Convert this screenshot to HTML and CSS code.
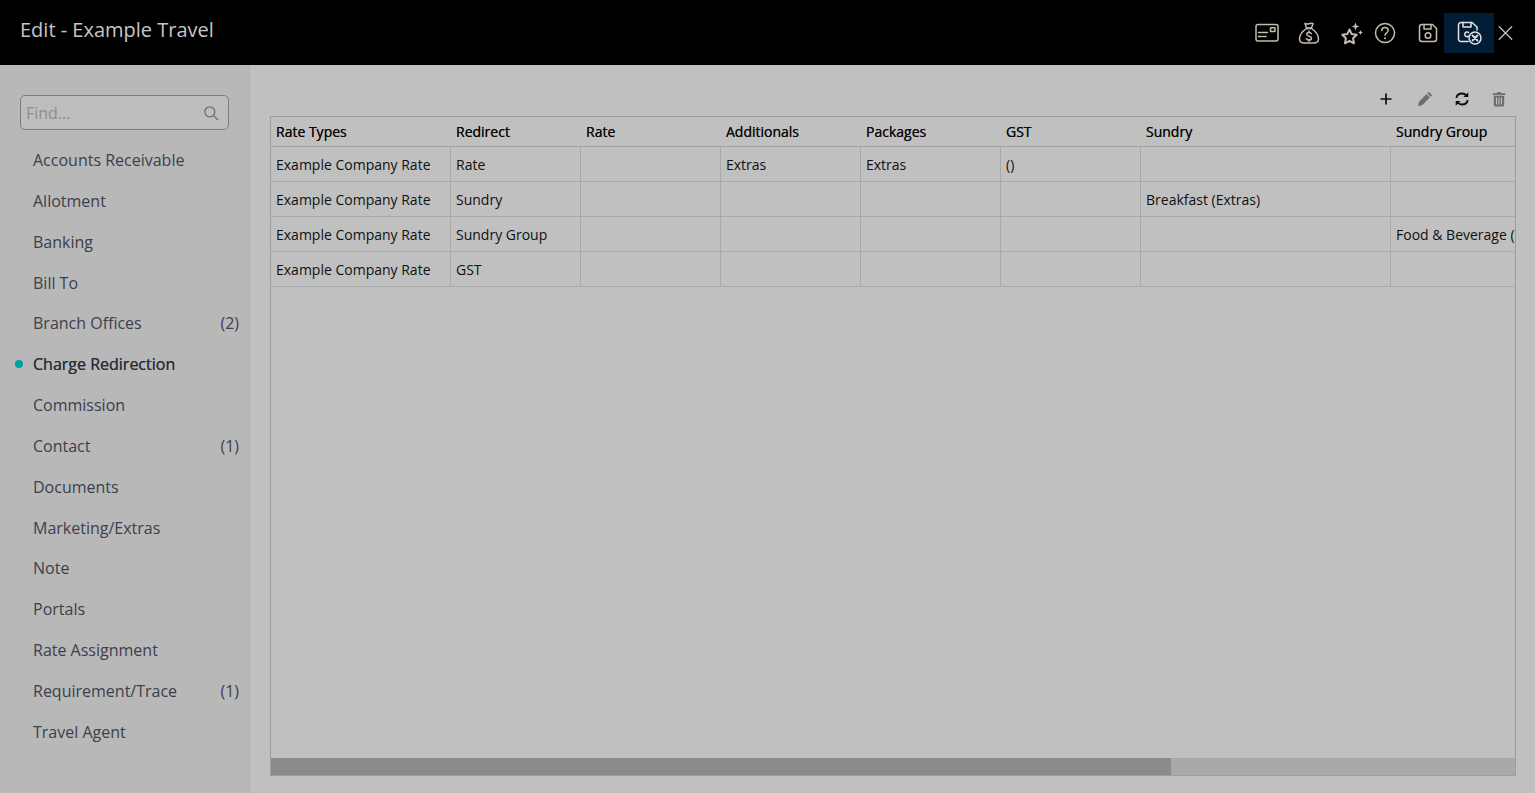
FILE: index.html
```html
<!DOCTYPE html>
<html lang="en">
<head>
<meta charset="utf-8">
<title>Edit - Example Travel</title>
<link rel="stylesheet" href="styles.css">
</head>
<body>
<header class="topbar">
  <h1 class="title">Edit - Example Travel</h1>
  <div class="actions">
    <button class="act act-card" aria-label="Card"><svg viewBox="0 0 24 24" width="24" height="24"><rect x="1" y="3.500" width="22" height="16.500" rx="2"/><rect x="15.500" y="6.800" width="4.500" height="3.700" rx=".5"/><path d="M3.500 11.500h9M3.500 15.500h3M8 15.500h3"/></svg></button>
    <button class="act act-bag" aria-label="Money"><svg viewBox="0 0 24 24" width="24" height="24"><path d="M8 2.500c1.500.8 2.500.8 4 .2s2.500-.5 4-.2L14.500 7h-5z"/><path d="M9.500 7.500C5 10.500 2.500 14.500 2.500 18c0 3 2 4 5 4h9c3 0 5-1 5-4 0-3.500-2.500-7.500-7-10.500z"/><path d="M14.300 12.600c-.6-.8-1.400-1.100-2.300-1.100-1.300 0-2.300.7-2.300 1.800 0 2.500 4.800 1.300 4.800 3.900 0 1.100-1.100 1.800-2.500 1.800-1 0-2-.4-2.600-1.200M12 10v1.500M12 18.800v1.400"/></svg></button>
    <button class="act act-star" aria-label="Features"><svg viewBox="0 0 24 24" width="24" height="24"><path class="thick" d="M9.500 8.500l2.200 4.600 5 .7-3.600 3.500.9 5-4.500-2.400L5 22.300l.9-5-3.600-3.500 5-.7z"/><path class="fill" d="M15.500 1.500l1.100 2.900 2.900 1.100-2.900 1.100-1.100 2.900-1.100-2.900-2.900-1.100 2.900-1.100zM20.500 9l.8 1.700 1.700.8-1.700.8-.8 1.700-.8-1.700-1.700-.8 1.700-.8z"/></svg></button>
    <button class="act act-help" aria-label="Help"><svg viewBox="0 0 24 24" width="24" height="24"><circle cx="12" cy="12" r="9.500"/><path d="M8.800 9.500c0-1.900 1.400-3 3.200-3s3.200 1.100 3.200 2.800c0 2.500-3.200 2.500-3.200 5"/><circle class="fill" cx="12" cy="17.200" r="1"/></svg></button>
    <button class="act act-save" aria-label="Save"><svg viewBox="0 0 24 24" width="24" height="24"><path d="M6 3.500h10.500l4 4V18a2.500 2.500 0 0 1-2.500 2.500H6A2.500 2.500 0 0 1 3.500 18V6A2.500 2.500 0 0 1 6 3.500z"/><path d="M8 3.500v4.500h7V3.500"/><circle cx="12" cy="14.500" r="2.800"/></svg></button>
    <button class="act act-saveclose" aria-label="Save and close"><svg viewBox="0 0 26 26" width="26" height="26"><path class="bright" d="M12 21.500H5A2.500 2.500 0 0 1 2.500 19V5A2.500 2.500 0 0 1 5 2.500h11l5 4.500v3"/><path class="bright" d="M7 2.500v4.500h8V2.500M12.500 12.500c-.7-.8-3.700-1-3.700 1.800 0 2.800 2.600 2.700 3.700 1.800"/><circle class="bright" cx="19" cy="18" r="6"/><path class="bright heavy" d="M16.500 15.500l5 5M21.500 15.500l-5 5"/></svg></button>
    <button class="act act-close" aria-label="Close"><svg viewBox="0 0 24 24" width="24" height="24"><path d="M5.500 5.500l13 13M18.500 5.500l-13 13"/></svg></button>
  </div>
</header>
<div class="body">
  <aside class="sidebar">
    <div class="find">
      <span class="find-text">Find...</span>
      <svg class="find-icon" viewBox="0 0 16 16" width="16" height="16"><circle cx="6.800" cy="6.800" r="5"/><path d="M10.500 10.500l4.500 4.500"/></svg>
    </div>
    <nav class="nav">
      <a class="nav-item">Accounts Receivable</a>
      <a class="nav-item">Allotment</a>
      <a class="nav-item">Banking</a>
      <a class="nav-item">Bill To</a>
      <a class="nav-item">Branch Offices<span class="count">(2)</span></a>
      <a class="nav-item current">Charge Redirection</a>
      <a class="nav-item">Commission</a>
      <a class="nav-item">Contact<span class="count">(1)</span></a>
      <a class="nav-item">Documents</a>
      <a class="nav-item">Marketing/Extras</a>
      <a class="nav-item">Note</a>
      <a class="nav-item">Portals</a>
      <a class="nav-item">Rate Assignment</a>
      <a class="nav-item">Requirement/Trace<span class="count">(1)</span></a>
      <a class="nav-item">Travel Agent</a>
    </nav>
  </aside>
  <main class="main">
    <div class="toolbar">
      <button class="tool tool-add" aria-label="Add"><svg viewBox="0 0 16 16" width="16" height="16"><path class="t-dark" d="M8 2.500v11M2.500 8h11"/></svg></button>
      <button class="tool" aria-label="Edit"><svg viewBox="0 0 16 16" width="16" height="16"><path class="t-grey-fill" d="M11.800.8l3.400 3.400-1.500 1.500-3.400-3.400zM9.500 3.100l3.400 3.400L5.400 14 1 15.200l1-4.500z"/></svg></button>
      <button class="tool" aria-label="Refresh"><svg viewBox="0 0 16 16" width="16" height="16"><path class="t-dark2" d="M2.300 7C2.800 4.200 5.200 2.500 8 2.500c1.800 0 3.300.8 4.300 2M13.700 9c-.5 2.800-2.900 4.500-5.700 4.500-1.800 0-3.300-.8-4.300-2"/><path class="t-dark-fill" d="M14.300 1.200v4.800H9.500zM1.700 14.800V10h4.800z"/></svg></button>
      <button class="tool" aria-label="Delete"><svg viewBox="0 0 16 16" width="16" height="16"><path class="t-grey-fill" d="M1.800 2.300h4l.6-1.300h3.200l.6 1.300h4v1.600H1.800z"/><path class="t-grey-fill" fill-rule="evenodd" d="M2.800 4.700h10.400v9.300c0 .9-.6 1.500-1.500 1.500H4.300c-.9 0-1.500-.6-1.500-1.500zM5 6.500v7h1.100v-7zM7.450 6.500v7h1.100v-7zM9.900 6.500v7H11v-7z"/></svg></button>
    </div>
    <div class="grid-box">
      <div class="grid-view">
        <table class="grid">
          <colgroup>
            <col class="c180"><col class="c130"><col class="c140"><col class="c140"><col class="c140"><col class="c140"><col class="c250"><col class="c250"><col class="c352">
          </colgroup>
          <thead>
            <tr><th>Rate Types</th><th>Redirect</th><th>Rate</th><th>Additionals</th><th>Packages</th><th>GST</th><th>Sundry</th><th>Sundry Group</th><th></th></tr>
          </thead>
          <tbody>
            <tr><td>Example Company Rate</td><td>Rate</td><td></td><td>Extras</td><td>Extras</td><td>()</td><td></td><td></td><td></td></tr>
            <tr><td>Example Company Rate</td><td>Sundry</td><td></td><td></td><td></td><td></td><td>Breakfast (Extras)</td><td></td><td></td></tr>
            <tr><td>Example Company Rate</td><td>Sundry Group</td><td></td><td></td><td></td><td></td><td></td><td>Food &amp; Beverage (Extras)</td><td></td></tr>
            <tr><td>Example Company Rate</td><td>GST</td><td></td><td></td><td></td><td></td><td></td><td></td><td></td></tr>
          </tbody>
        </table>
      </div>
      <div class="hscroll"><div class="hthumb"></div></div>
    </div>
  </main>
</div>
</body>
</html>
```
FILE: styles.css
```css
* { box-sizing: border-box; }
html, body { margin: 0; height: 100%; }
body {
  display: flex;
  flex-direction: column;
  height: 793px;
  overflow: hidden;
  background: #c0c0c0;
  font-family: "Open Sans", "Liberation Sans", sans-serif;
  color: #1c1c1c;
}
button { background: none; border: 0; padding: 0; margin: 0; display: flex; align-items: center; justify-content: center; }
svg { display: block; fill: none; }

.topbar {
  flex: 0 0 65px;
  background: #000;
  display: flex;
  align-items: center;
  justify-content: space-between;
  padding: 1px 18px 0 20px;
}
.title { margin: 0 0 7px; font-size: 20px; font-weight: 400; color: #c6c6c6; line-height: 28px; }
.actions { display: flex; align-items: center; }
.act { height: 40px; }
.act svg { stroke: #c4bcae; stroke-width: 1.500; stroke-linejoin: round; stroke-linecap: round; }
.act svg .fill { fill: #c4bcae; stroke: none; }
.act svg .thick { stroke-width: 2; }
.act-card { width: 24px; margin-right: 18px; }
.act-bag { width: 24px; margin-right: 19px; }
.act-star { width: 24px; margin-right: 9px; }
.act-help { width: 24px; margin-right: 19px; }
.act-save { width: 24px; margin-right: 4px; }
.act-saveclose { width: 50px; background: #011c36; height: 40px; }
.act-saveclose svg .bright { stroke: #e4e4e4; stroke-width: 1.500; }
.act-saveclose svg .heavy { stroke-width: 1.800; }
.act-close { width: 23px; }
.act-close svg { stroke: #c6c6c0; stroke-width: 1.300; }

.body { flex: 1; display: flex; min-height: 0; }
.sidebar {
  flex: 0 0 250px;
  background: #b8b8b8;
  border-right: 1px solid #b0b0b0;
  padding: 30px 10px 0 20px;
}
.find {
  width: 209px;
  height: 35px;
  border: 1px solid #7d7d7d;
  border-radius: 5px;
  background: #bdbdbd;
  display: flex;
  align-items: center;
  justify-content: space-between;
  padding: 0 9px 0 5px;
}
.find-text { font-size: 16px; color: #8e8e8e; }
.find-icon { stroke: #6b6b6b; stroke-width: 1.200; }
.nav { display: flex; flex-direction: column; margin-top: 9.700px; }
.nav-item {
  position: relative;
  height: 40.84px;
  display: flex;
  align-items: center;
  justify-content: space-between;
  padding-left: 13px;
  font-size: 16px;
  color: #3c3f4c;
}
.count { color: #3c3f4c; }
.current { font-weight: 500; color: #2b2e3b; text-shadow: 0 0 .4px #2b2e3b; }
.current::before {
  content: "";
  position: absolute;
  left: -5px;
  top: 16px;
  width: 8px;
  height: 8px;
  border-radius: 50%;
  background: #019ea1;
}

.main { flex: 1; min-width: 0; display: flex; flex-direction: column; padding: 0 19px 17px 20px; }
.toolbar { flex: 0 0 51px; display: flex; justify-content: flex-end; align-items: flex-end; gap: 21px; padding: 0 9px 9px 0; }
.tool { width: 16px; height: 16px; }
.tool-add { margin-right: 2px; }
.t-dark { stroke: #0c0c0c; stroke-width: 1.700; }
.t-dark2 { stroke: #0c0c0c; stroke-width: 1.800; }
.t-dark-fill { fill: #0c0c0c; }
.t-grey-fill { fill: #6e6e6e; }

.grid-box {
  flex: 1;
  min-height: 0;
  border: 1px solid #9d9d9d;
  display: flex;
  flex-direction: column;
}
.grid-view { flex: 1; min-height: 0; overflow: hidden; }
.grid { border-collapse: separate; border-spacing: 0; table-layout: fixed; width: 1722px; font-size: 14px; color: #111; }
.c180 { width: 180px; }
.c130 { width: 130px; }
.c140 { width: 140px; }
.c250 { width: 250px; }
.c352 { width: 352px; }
.grid th {
  height: 30px;
  padding: 0 5px;
  text-align: left;
  font-weight: 500;
  color: #0c0c0c;
  text-shadow: 0 0 .4px #0c0c0c;
  border-bottom: 1px solid #a3a3a3;
  white-space: nowrap;
  overflow: hidden;
}
.grid td {
  height: 35px;
  padding: 0 5px;
  border-bottom: 1px solid #a9a9a9;
  border-right: 1px solid #a9a9a9;
  white-space: nowrap;
  overflow: hidden;
}
.hscroll { flex: 0 0 17px; background: #a9a9a9; }
.hthumb { width: 900px; height: 100%; background: #8b8b8b; }
```
